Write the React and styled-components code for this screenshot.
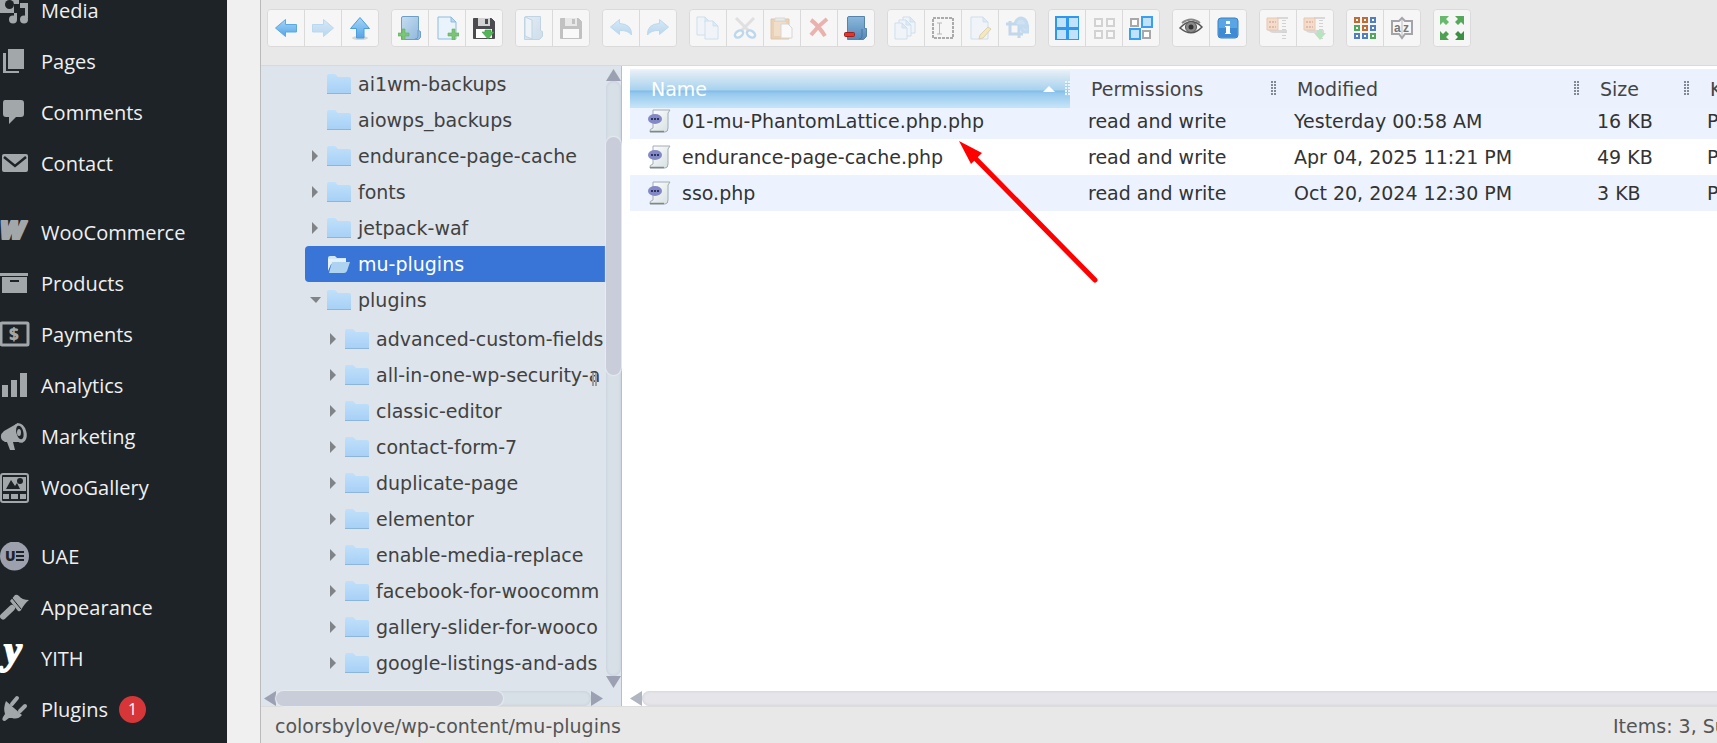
import React from "react";
import styled, { createGlobalStyle } from "styled-components";

const GlobalStyle = createGlobalStyle`
  * {
    box-sizing: border-box;
  }
  body {
    margin: 0;
    background: #f0f0f1;
    font-variant-ligatures: none;
  }
  ul {
    margin: 0;
    padding: 0;
    list-style: none;
  }
  a {
    color: inherit;
    text-decoration: none;
  }
  svg {
    display: block;
    flex: none;
  }
`;

const Page = styled.div`
  display: flex;
  height: 100vh;
  overflow: hidden;
`;

/* admin menu */

const Sidebar = styled.nav`
  flex: none;
  width: 227px;
  overflow: hidden;
  background: #1d2327;
  color: #f0f0f1;
  font: 20px/28px "Open Sans", "Noto Sans", sans-serif;
`;

// the menu is scrolled, so its first item is cut by the top edge
const MenuList = styled.ul`
  margin-top: -15px;
`;

const MenuItem = styled.li`
  margin-top: ${(props) => (props.$spaced ? "18px" : "0")};
`;

const MenuLink = styled.a`
  display: flex;
  align-items: center;
  gap: 11px;
  height: 51px;
`;

const Badge = styled.span`
  width: 27px;
  height: 27px;
  border-radius: 50%;
  background: #d63638;
  color: #fff;
  font-size: 16px;
  line-height: 27px;
  text-align: center;
`;

const MenuIcon = styled.svg.attrs({ viewBox: "0 0 30 30", "aria-hidden": true })`
  width: 30px;
  height: 30px;
  fill: #a2a7aa;
`;

/* file manager */

const Manager = styled.main`
  flex: 1;
  display: flex;
  flex-direction: column;
  min-width: 0;
  margin: 0 -116px 0 33px;
  border-left: 1px solid #bbbbbd;
  background: #e8e8e8;
  font: 19px/24px "DejaVu Sans", Verdana, sans-serif;
`;

const Toolbar = styled.div`
  display: flex;
  gap: 12px;
  padding: 9px 6px 18px;
  border-bottom: 1px solid #d9d9d9;
`;

const ButtonGroup = styled.div`
  display: flex;
  border: 1px solid #dadada;
  border-radius: 4px;
  overflow: hidden;
`;

const ToolButton = styled.button`
  display: flex;
  align-items: center;
  justify-content: center;
  width: 37px;
  height: 36px;
  padding: 0;
  border: 0;
  border-right: 1px solid #dadada;
  background: #f6f6f6;
  &:last-child {
    width: 36px;
    border-right: 0;
  }
  svg {
    opacity: ${(props) => (props.disabled ? 0.38 : 1)};
  }
`;

const ToolIcon = styled.svg.attrs({ viewBox: "0 0 24 24", "aria-hidden": true })`
  width: 24px;
  height: 24px;
  fill: none;
`;

const WorkZone = styled.div`
  flex: 1;
  display: flex;
  min-height: 0;
`;

const TreePane = styled.aside`
  flex: none;
  display: grid;
  grid-template: minmax(0, 1fr) 15px / minmax(0, 1fr) 15px;
  position: relative;
  width: 361px;
  border-right: 1px solid #bbbdc2;
  background: #dde4eb;
  color: #414141;
`;

const TreeScroll = styled.div`
  overflow: hidden;
  white-space: nowrap;
  padding-left: 44px;
`;

const SubTree = styled.ul`
  padding: 3px 0 0 18px;
`;

const TreeRow = styled.a`
  display: flex;
  align-items: center;
  height: 36px;
  border-radius: 4px 0 0 4px;
  background: ${(props) => (props.$active ? "#3875d7" : "transparent")};
  color: ${(props) => (props.$active ? "#fff" : "inherit")};
`;

const Twisty = styled.svg.attrs({ viewBox: "0 0 22 16", "aria-hidden": true })`
  width: 22px;
  height: 16px;
  fill: #808387;
`;

const FolderIcon = styled.svg.attrs({ viewBox: "0 0 24 24", "aria-hidden": true })`
  width: 24px;
  height: 24px;
  margin-right: 7px;
`;

const ResizeGrip = styled.span`
  position: absolute;
  left: 331px;
  top: 307px;
  width: 5px;
  height: 13px;
  border: 2px solid #9d9d9d;
  border-width: 0 2px;
`;

const ScrollBar = styled.div`
  display: flex;
  flex-direction: ${(props) => (props.$vertical ? "column" : "row")};
  padding: ${(props) => (props.$vertical ? "3px 0" : "0 3px")};
`;

const FileScrollBar = styled(ScrollBar)`
  padding: 0;
`;

const ScrollTrack = styled.div`
  flex: 1;
  display: flex;
  flex-direction: inherit;
  border-radius: 8px;
  background: ${(props) => (props.$light ? "#e5e5ea" : "#d8e0e7")};
  box-shadow: inset 0 0 3px rgba(120, 130, 150, 0.25);
`;

const ScrollThumb = styled.div`
  border-radius: 8px;
  background: #c8cdd9;
  box-shadow: 0 0 1px 1px #e6ebf0;
  ${(props) =>
    props.$vertical ? "height: 40%; margin-top: 56px;" : "width: 72%;"}
`;

const ScrollArrow = styled.svg.attrs({ "aria-hidden": true })`
  width: ${(props) => (props.$vertical ? "15px" : "12px")};
  height: ${(props) => (props.$vertical ? "12px" : "15px")};
  fill: ${(props) => (props.$light ? "#b1b5bf" : "#9ba1b2")};
`;

const FilePane = styled.section`
  flex: 1;
  display: flex;
  flex-direction: column;
  position: relative;
  min-width: 0;
  padding: 3px 0 0 8px;
  background: #fff;
  color: #333;
`;

const FileArea = styled.div`
  flex: 1;
  overflow: hidden;
`;

const FileTable = styled.table`
  width: 100%;
  table-layout: fixed;
  border-collapse: collapse;
  white-space: nowrap;
`;

const HeadRow = styled.tr`
  position: relative;
  z-index: 1;
`;

const HeadCell = styled.th`
  width: ${(props) => props.$width};
  height: 34px;
  padding: 0;
  vertical-align: top;
  font-weight: normal;
  text-align: left;
`;

// taller than its cell: the header stays over the top of the first row
const HeadLabel = styled.div`
  display: flex;
  align-items: center;
  height: 39px;
  margin-bottom: -5px;
  padding-left: 21px;
  color: ${(props) => (props.$sorted ? "#fff" : "#444")};
  background: ${(props) =>
    props.$sorted
      ? "linear-gradient(#edf3fe 1px, #e4eef6 2px, #a8d2ee 21px, #7fbbe8 22px, #93c8ec 24px, #c5e3f8 38px)"
      : "#ebf2fe"};
`;

const SortMark = styled.span`
  margin-left: auto;
  margin-right: 10px;
  border: 6px solid transparent;
  border-top: 0;
  border-bottom-color: #fff;
`;

const ColumnGrip = styled.span`
  width: 5px;
  height: 15px;
  margin-left: ${(props) => (props.$sorted ? "0" : "auto")};
  color: ${(props) => (props.$sorted ? "#e9f4fc" : "#858a92")};
  background: repeating-linear-gradient(
      transparent 0 2px,
      ${(props) => (props.$sorted ? "#a8d2ee" : "#ebf2fe")} 2px 3px
    ),
    linear-gradient(90deg, currentColor 2px, transparent 2px 3px, currentColor 3px);
`;

const FileRow = styled.tr`
  background: #fff;
  &:nth-child(odd) {
    background: #edf3fe;
  }
`;

const FileCell = styled.td`
  height: 36px;
  padding: 0 0 0 18px;
  overflow: hidden;
`;

const FileName = styled.div`
  display: flex;
  align-items: center;
  gap: 10px;
`;

const ArrowMark = styled.svg`
  position: absolute;
  left: 334px;
  top: 72px;
  width: 146px;
  height: 148px;
`;

const StatusBar = styled.footer`
  display: flex;
  justify-content: space-between;
  height: 37px;
  padding: 7px 8px 0 14px;
  border-top: 1px solid #dcdcdc;
  color: #555;
  white-space: nowrap;
`;

const StatusInfo = styled.div`
  width: 212px;
`;

const Gradients = () => (
  <svg width="0" height="0" style={{ position: "absolute" }} aria-hidden="true">
    <defs>
      <linearGradient id="sky" x1="0" y1="0" x2="0" y2="1">
        <stop offset="0" stopColor="#a6d5f7" />
        <stop offset="1" stopColor="#55a5e6" />
      </linearGradient>
      <linearGradient id="book" x1="0" y1="0" x2="1" y2="1">
        <stop offset="0" stopColor="#c5ddf0" />
        <stop offset="1" stopColor="#8eb7dc" />
      </linearGradient>
      <linearGradient id="bookDark" x1="0" y1="0" x2="0" y2="1">
        <stop offset="0" stopColor="#8bb8dc" />
        <stop offset="1" stopColor="#5688b8" />
      </linearGradient>
      <linearGradient id="folder" x1="0" y1="0" x2="0" y2="1">
        <stop offset="0" stopColor="#c0e0fa" />
        <stop offset="1" stopColor="#a6d0f6" />
      </linearGradient>
      <linearGradient id="paper" x1="0" y1="0" x2="1" y2="1">
        <stop offset="0" stopColor="#ffffff" />
        <stop offset="1" stopColor="#d5dfe2" />
      </linearGradient>
    </defs>
  </svg>
);

const Plus = ({ x, y }) => (
  <path
    transform={`translate(${x} ${y})`}
    d="M4 0h3v4h4v3H7v4H4V7H0V4h4z"
    fill="#7cc576"
    stroke="#5fae5c"
    strokeWidth="0.6"
  />
);

const Floppy = ({ color }) => (
  <>
    <path d="M1.500 2.500h18l3 3v17h-21z" fill={color} stroke={color} />
    <path d="M6 2h12v8H6z" fill="#d2d2d2" />
    <path d="M13 3h3v5h-3z" fill={color} />
    <path d="M4 13h16v9H4z" fill="#fff" />
  </>
);

const Sheet = ({ x, y, w = 13, h = 17 }) => (
  <>
    <path
      d={`M${x} ${y}h${w - 5}l5 5v${h - 5}h-${w}z`}
      fill="#e8f3fc"
      stroke="#8fbbe0"
    />
    <path d={`M${x + w - 5} ${y}v5h5z`} fill="#b8d8f0" stroke="#8fbbe0" />
  </>
);

const Square = ({ x, y, size = 8, color = "#999", fill = "#fff", stroke = 2 }) => (
  <rect x={x} y={y} width={size} height={size} fill={fill} stroke={color} strokeWidth={stroke} />
);

const Archive = () => (
  <>
    <path d="M11 1h11v2H11zM2 14h19v3H8q-4 0-6-3z" fill="#a8a8a8" />
    <path d="M1 2h11v12H1z" fill="#efb684" stroke="#cf7b43" />
    <path d="M3 6h7M3 11h7" stroke="#c9582f" strokeWidth="2" strokeDasharray="2 1" />
    <path d="M18 4v20" stroke="#999" strokeWidth="4" strokeDasharray="1 2" />
  </>
);

const drawings = {
  back: <path d="M1.500 12 11.500 3.500V8.500H22.500V16H11.500V20.500z" fill="url(#sky)" stroke="#5ba9e2" />,
  forward: <path d="M22.500 12 12.500 3.500V8.500H1.500V16H12.500V20.500z" fill="url(#sky)" stroke="#5ba9e2" />,
  up: (
    <>
      <ellipse cx="12" cy="22" rx="8" ry="2" fill="#d5d5d5" />
      <path d="M12 1.500 21.500 12.500H16V22H8.500V12.500H2.500z" fill="url(#sky)" stroke="#4b9de0" />
    </>
  ),
  newFolder: (
    <>
      <path d="M3.500 2q0-1.500 1.500-1.500h15.500v14l2 1v6l-2 2H3.500z" fill="url(#book)" stroke="#6c9ec9" />
      <path d="M20 14v6q0 3-3 3" stroke="#6c9ec9" />
      <Plus x={0} y={13} />
    </>
  ),
  newFile: (
    <>
      <Sheet x={3} y={1} w={18} h={22} />
      <Plus x={13} y={13} />
    </>
  ),
  upload: (
    <>
      <Floppy color="#4b4b50" />
      <path d="M13 14h6v2h3l-6 7-6-7h3z" fill="#55b558" stroke="#44984a" strokeWidth="0.600" />
    </>
  ),
  open: (
    <>
      <path d="M2.500 2q0-1.500 1.500-1.500h14.500v14l2 1v5l-3 3H2.500z" fill="url(#book)" stroke="#6c9ec9" />
      <path d="M3 1l7 3v19l-7-3z" fill="#e1effa" stroke="#6c9ec9" />
    </>
  ),
  download: <Floppy color="#6e6e6e" />,
  undo: <path d="M1.500 11 10.500 3.500V7.500Q23 8 22.500 19 19 14 10.500 14.500V18.500z" fill="url(#sky)" stroke="#5ba9e2" />,
  redo: <path d="M22.500 11 13.500 3.500V7.500Q1 8 1.500 19 5 14 13.500 14.500V18.500z" fill="url(#sky)" stroke="#5ba9e2" />,
  copy: (
    <>
      <Sheet x={1} y={1} w={13} h={18} />
      <Sheet x={9} y={5} w={13} h={18} />
    </>
  ),
  cut: (
    <>
      <path d="M3 2 17 16M21 2 7 16" stroke="#bdbdbd" strokeWidth="3" />
      <ellipse cx="6" cy="18" rx="4.500" ry="3" transform="rotate(-35 6 18)" fill="#fff" stroke="#62a6dc" strokeWidth="2.500" />
      <ellipse cx="18" cy="18" rx="4.500" ry="3" transform="rotate(35 18 18)" fill="#fff" stroke="#62a6dc" strokeWidth="2.500" />
    </>
  ),
  paste: (
    <>
      <path d="M1 3h18v20H1z" fill="#d9974f" stroke="#bf7b36" />
      <path d="M4 6h12v14H4z" fill="#e7b87e" />
      <path d="M5 2h10v3H5z" fill="#d9d9c4" stroke="#aaa" />
      <path d="M11 8h7l4 4v10H11z" fill="#fff" stroke="#a5a5a5" />
    </>
  ),
  remove: <path d="M4 4q7 5 14 16M20 3Q11 10 4 19" stroke="#d4443a" strokeWidth="4" />,
  empty: (
    <>
      <path d="M3.500 2q0-1.500 1.500-1.500h15.500v12h2v8l-3 3H3.500z" fill="url(#bookDark)" stroke="#5583ad" />
      <path d="M18 13v7q0 3-3 3" stroke="#47749f" />
      <rect x="0.500" y="16.500" width="10" height="4" rx="1" fill="#e3362b" stroke="#a51f1a" />
    </>
  ),
  duplicate: (
    <>
      <Sheet x={9} y={1} w={12} h={16} />
      <Sheet x={5} y={4} w={12} h={16} />
      <Sheet x={1} y={7} w={12} h={16} />
    </>
  ),
  rename: (
    <>
      <rect x="2" y="2" width="20" height="20" stroke="#333" strokeWidth="2" strokeDasharray="3 1" />
      <path d="M6 7h5M6 18h5M8.500 7v11" stroke="#555" />
    </>
  ),
  edit: (
    <>
      <Sheet x={3} y={1} w={17} h={22} />
      <path d="M20 11l3 2-8 9-4 1 1-4z" fill="#f1d36b" stroke="#b6943c" />
    </>
  ),
  resize: (
    <>
      <path d="M5 5v13h13M1 8h13v14" stroke="#6fa6d6" strokeWidth="3" />
      <path d="M10 7q3-7 9-4 5 4 1 10M15 10h9v6H18z" fill="#8ec2ea" stroke="#6fb0e2" strokeWidth="3" />
    </>
  ),
  selectAll: (
    <>
      <path d="M0 0h24v24H0z" fill="#2f97ee" />
      {[2, 14].map((x) =>
        [2, 14].map((y) => <rect key={`${x}-${y}`} x={x} y={y} width="9" height="9" fill="#c0e2fb" />)
      )}
    </>
  ),
  selectNone: [3, 15].map((x) => [3, 15].map((y) => <Square key={`${x}-${y}`} x={x} y={y} size={7} />)),
  invert: (
    <>
      <Square x={2} y={3} size={7} color="#a8a8a8" />
      <Square x={14} y={15} size={7} color="#a8a8a8" />
      <Square x={13} y={1} size={10} color="#3a9ff0" fill="#c0e2fb" />
      <Square x={1} y={13} size={10} color="#3a9ff0" fill="#c0e2fb" />
    </>
  ),
  preview: (
    <>
      <path d="M1 12Q12 0 23 11 13 22 1 12z" fill="#f4f4f4" stroke="#555" strokeWidth="1.500" />
      <circle cx="12" cy="11" r="5.500" fill="#8a8a8a" stroke="#555" />
      <circle cx="12" cy="11" r="2.500" fill="#333" />
      <path d="M3 7Q12 0 21 7" stroke="#888" strokeWidth="2" />
    </>
  ),
  info: (
    <>
      <rect x="2" y="2" width="20" height="20" rx="3" fill="#5aa5e3" stroke="#3b81c4" />
      <path d="M3 12h18v8q0 1-1 1H4q-1 0-1-1z" fill="#3d8bd3" />
      <path d="M10 5h4v3h-4zM9 10h5v7h1v1H9v-1h1v-6H9z" fill="#fff" />
    </>
  ),
  extract: <Archive />,
  archive: (
    <>
      <Archive />
      <path d="M14 14h5v3h4l-6 7-6-7h3z" fill="#55c56d" />
    </>
  ),
  view: ["#c06a35", "#c06a35", "#4f7fc0", "#4fa95a", "#c06a35", "#4f7fc0", "#4f7fc0", "#4f7fc0", "#4fa95a"].map(
    (color, i) => (
      <Square key={i} x={2 + (i % 3) * 8} y={2 + Math.floor(i / 3) * 8} size={4} color={color} />
    )
  ),
  sort: (
    <>
      <path d="M2 5h7l3-3 3 3h7v13h-7l-3 4-3-4H2z" fill="#f7f7f7" stroke="#a3a5a8" strokeWidth="2" />
      <path d="M12 4v16" stroke="#bbb" />
      <text x="4" y="16" fontSize="12" fontWeight="bold" fill="#777">a</text>
      <text x="13" y="16" fontSize="12" fontWeight="bold" fill="#777">z</text>
    </>
  ),
  fullscreen: (
    <>
      <path d="M0 0h9L6 3l3 3-3 3-3-3-3 3z" fill="#67b96b" />
      <path d="M24 0v9l-3-3-3 3-3-3 3-3-3-3z" fill="#55a85a" />
      <path d="M0 24v-9l3 3 3-3 3 3-3 3 3 3z" fill="#4da150" />
      <path d="M24 24h-9l3-3-3-3 3-3 3 3 3-3z" fill="#3c8f42" />
    </>
  ),
};

const toolbarGroups = [
  [["Back", "back"], ["Forward", "forward", true], ["Go to parent folder", "up"]],
  [["New folder", "newFolder"], ["New file", "newFile"], ["Upload files", "upload"]],
  [["Open", "open", true], ["Download", "download", true]],
  [["Undo", "undo", true], ["Redo", "redo", true]],
  [
    ["Copy", "copy", true],
    ["Cut", "cut", true],
    ["Paste", "paste", true],
    ["Delete", "remove", true],
    ["Empty the folder", "empty"],
  ],
  [
    ["Duplicate", "duplicate", true],
    ["Rename", "rename", true],
    ["Edit file", "edit", true],
    ["Resize", "resize", true],
  ],
  [["Select all", "selectAll"], ["Select none", "selectNone", true], ["Invert selection", "invert"]],
  [["Preview", "preview"], ["Get info", "info"]],
  [["Extract", "extract", true], ["Create archive", "archive", true]],
  [["View", "view"], ["Sort", "sort"]],
  [["Full screen", "fullscreen"]],
];

const menu = [
  {
    label: "Media",
    icon: (
      <>
        <path d="M0 0h19v8h-5v9H0z" />
        <circle cx="9.500" cy="8.500" r="4.500" fill="#1d2327" />
        <path d="M20 7h8v15h-3V12h-5zM14 17h3v6h-3z" />
        <circle cx="13" cy="23.500" r="4" />
        <circle cx="24" cy="23.500" r="4" />
      </>
    ),
  },
  { label: "Pages", icon: <path d="M8 2h16v20H8zM3 6h3v18h13v2H3z" /> },
  { label: "Comments", icon: <path d="M5 2h16q3 0 3 3v11q0 3-3 3h-5l-7 7v-7H6q-3 0-3-3V5q0-3 2-3z" /> },
  {
    label: "Contact",
    icon: (
      <>
        <rect x="2" y="5" width="26" height="18" rx="2" />
        <path d="M4 8l11 9 11-9" fill="none" stroke="#1d2327" strokeWidth="2.500" />
      </>
    ),
  },
  {
    label: "WooCommerce",
    spaced: true,
    icon: (
      <text x="0" y="21" fontSize="31" fontWeight="800" fontStyle="italic" stroke="#a2a7aa" strokeWidth="2" strokeLinejoin="round">
        w
      </text>
    ),
  },
  { label: "Products", icon: <path d="M0 4h28v3H0zM2 8h25v16H2zM10 11v2h9v-2z" fillRule="evenodd" /> },
  {
    label: "Payments",
    icon: (
      <>
        <rect x="1" y="3" width="27" height="22" rx="1" fill="none" stroke="#a2a7aa" strokeWidth="3" />
        <text x="9" y="20" fontSize="17" fontWeight="800">$</text>
      </>
    ),
  },
  { label: "Analytics", icon: <path d="M2 14h6v12H2zM11 9h6v17h-6zM20 2h7v24h-7z" /> },
  {
    label: "Marketing",
    icon: (
      <>
        <path d="M18 1 4 9q-5 4-2 9l3 2h2l3 8h5l-2-8 10 0z" />
        <ellipse cx="20" cy="11" rx="6.500" ry="10" transform="rotate(-14 20 11)" />
        <ellipse cx="20" cy="10.500" rx="3.500" ry="7" transform="rotate(-14 20 11)" fill="#1d2327" />
        <ellipse cx="19" cy="10.500" rx="2" ry="3.500" />
      </>
    ),
  },
  {
    label: "WooGallery",
    icon: (
      <>
        <rect x="1" y="1" width="27" height="28" rx="2" fill="none" stroke="#a2a7aa" strokeWidth="2" />
        <path d="M3 4h23v14H3zM3 21h6v5H3zM11 21h7v5h-7zM20 21h6v5h-6z" />
        <path d="M6 16l5-9 4 6 2-3 3 6z" fill="#1d2327" />
        <circle cx="20" cy="8" r="3" fill="#1d2327" />
      </>
    ),
  },
  {
    label: "UAE",
    spaced: true,
    icon: (
      <>
        <circle cx="14.500" cy="14" r="14.500" fill="#9ca1ad" />
        <text x="5" y="19" fontSize="14" fontWeight="800" fill="#1d2327">U</text>
        <path d="M16 9h8v2h-8zM16 13h8v2h-8zM16 17h8v2h-8z" fill="#1d2327" />
      </>
    ),
  },
  {
    label: "Appearance",
    icon: (
      <>
        <path d="M3 23.500 12 15" stroke="#a2a7aa" strokeWidth="6" strokeLinecap="round" />
        <path d="M10 8l5-6q2-1 4 1 3 4 10 4-4 3-8 10-1 2-3 1z" />
        <path d="M12 5l9 11" stroke="#1d2327" strokeWidth="1" />
      </>
    ),
  },
  {
    label: "YITH",
    icon: (
      <text
        x="4"
        y="19"
        fontSize="40"
        fontWeight="bold"
        fontStyle="italic"
        fontFamily="Liberation Serif, serif"
        fill="#fff"
        stroke="#fff"
        strokeWidth="2"
        strokeLinejoin="round"
      >
        y
      </text>
    ),
  },
  {
    label: "Plugins",
    count: 1,
    icon: (
      <>
        <path d="M6 6 22 20q-4 5-10 3l-3 0-4 3q-4 0-2-4l2-3q-2-6 1-13z" />
        <path d="M12 9l5-6M20 16l5-5" stroke="#a2a7aa" strokeWidth="4" strokeLinecap="round" />
      </>
    ),
  },
];

const tree = [
  { name: "ai1wm-backups" },
  { name: "aiowps_backups" },
  { name: "endurance-page-cache", state: "closed" },
  { name: "fonts", state: "closed" },
  { name: "jetpack-waf", state: "closed" },
  { name: "mu-plugins", active: true },
  {
    name: "plugins",
    state: "open",
    children: [
      "advanced-custom-fields",
      "all-in-one-wp-security-a",
      "classic-editor",
      "contact-form-7",
      "duplicate-page",
      "elementor",
      "enable-media-replace",
      "facebook-for-woocomm",
      "gallery-slider-for-wooco",
      "google-listings-and-ads",
    ].map((name) => ({ name, state: "closed" })),
  },
];

const columns = [
  { title: "Name", width: "440px", sorted: true },
  { title: "Permissions", width: "206px" },
  { title: "Modified", width: "303px" },
  { title: "Size", width: "110px" },
  { title: "Kind" },
];

const files = [
  { name: "01-mu-PhantomLattice.php.php", modified: "Yesterday 00:58 AM", size: "16 KB" },
  { name: "endurance-page-cache.php", modified: "Apr 04, 2025 11:21 PM", size: "49 KB" },
  { name: "sso.php", modified: "Oct 20, 2024 12:30 PM", size: "3 KB" },
];

const Folder = ({ open }) =>
  open ? (
    <FolderIcon>
      <path d="M1 6q0-2 2-2h5l2 2h9v6H1z" fill="#d3e6f5" />
      <path d="M5 10h18l-3 9q-1 2-3 2H2z" fill="#aed3f0" />
      <path d="M1 7h18v3H5l-4 9z" fill="#e5f1fa" />
    </FolderIcon>
  ) : (
    <FolderIcon>
      <path d="M0 4q0-2 2-2h6l3 3h11q2 0 2 2v15H0z" fill="url(#folder)" />
      <path d="M0 21h24v1H0z" fill="#8cb5db" />
    </FolderIcon>
  );

const PhpIcon = () => (
  <ToolIcon>
    <path d="M5 1h17l-2 3v15q0 4-3 4H2q-1-3 3-4z" fill="url(#paper)" stroke="#a3adb0" />
    <path d="M2 22.500h14" stroke="#80888b" strokeWidth="1.500" />
    <ellipse cx="7" cy="10" rx="7" ry="5" fill="#8389c4" />
    <path d="M3 9h2v2H3zM6 9h2v2H6zM9 9h2v2H9z" fill="#30335f" />
  </ToolIcon>
);

const TreeNode = ({ node }) => (
  <li>
    <TreeRow href="#" $active={node.active}>
      <Twisty>
        {node.state === "closed" && <path d="M7 2l6 6-6 6z" />}
        {node.state === "open" && <path d="M5 5h11l-5 6z" />}
      </Twisty>
      <Folder open={node.active} />
      {node.name}
    </TreeRow>
    {node.children && (
      <SubTree>
        {node.children.map((child) => (
          <TreeNode key={child.name} node={child} />
        ))}
      </SubTree>
    )}
  </li>
);

export default function App() {
  return (
    <Page>
      <GlobalStyle />
      <Gradients />
      <Sidebar aria-label="Main menu">
        <MenuList>
          {menu.map((item) => (
            <MenuItem key={item.label} $spaced={item.spaced}>
              <MenuLink href="#">
                <MenuIcon>{item.icon}</MenuIcon>
                {item.label}
                {item.count && <Badge>{item.count}</Badge>}
              </MenuLink>
            </MenuItem>
          ))}
        </MenuList>
      </Sidebar>

      <Manager>
        <Toolbar role="toolbar">
          {toolbarGroups.map((group) => (
            <ButtonGroup key={group[0][1]}>
              {group.map(([label, icon, disabled]) => (
                <ToolButton key={icon} type="button" aria-label={label} title={label} disabled={disabled}>
                  <ToolIcon>{drawings[icon]}</ToolIcon>
                </ToolButton>
              ))}
            </ButtonGroup>
          ))}
        </Toolbar>

        <WorkZone>
          <TreePane>
            <TreeScroll>
              <ul>
                {tree.map((node) => (
                  <TreeNode key={node.name} node={node} />
                ))}
              </ul>
            </TreeScroll>
            <ScrollBar $vertical>
              <ScrollArrow $vertical viewBox="0 0 15 12">
                <path d="M7.500 0 15 12H0z" />
              </ScrollArrow>
              <ScrollTrack>
                <ScrollThumb $vertical />
              </ScrollTrack>
              <ScrollArrow $vertical viewBox="0 0 15 12">
                <path d="M0 0h15L7.500 12z" />
              </ScrollArrow>
            </ScrollBar>
            <ScrollBar>
              <ScrollArrow viewBox="0 0 12 15">
                <path d="M12 0v15L0 7.500z" />
              </ScrollArrow>
              <ScrollTrack>
                <ScrollThumb />
              </ScrollTrack>
              <ScrollArrow viewBox="0 0 12 15">
                <path d="M0 0l12 7.500L0 15z" />
              </ScrollArrow>
            </ScrollBar>
            <ResizeGrip />
          </TreePane>

          <FilePane>
            <FileArea>
              <FileTable>
                <thead>
                  <HeadRow>
                    {columns.map((col) => (
                      <HeadCell key={col.title} $width={col.width} scope="col">
                        <HeadLabel $sorted={col.sorted}>
                          {col.title}
                          {col.sorted && <SortMark />}
                          <ColumnGrip $sorted={col.sorted} />
                        </HeadLabel>
                      </HeadCell>
                    ))}
                  </HeadRow>
                </thead>
                <tbody>
                  {files.map((file) => (
                    <FileRow key={file.name}>
                      <FileCell>
                        <FileName>
                          <PhpIcon />
                          {file.name}
                        </FileName>
                      </FileCell>
                      <FileCell>read and write</FileCell>
                      <FileCell>{file.modified}</FileCell>
                      <FileCell>{file.size}</FileCell>
                      <FileCell>PHP source</FileCell>
                    </FileRow>
                  ))}
                </tbody>
              </FileTable>
            </FileArea>
            <FileScrollBar>
              <ScrollArrow $light viewBox="0 0 12 15">
                <path d="M12 0v15L0 7.500z" />
              </ScrollArrow>
              <ScrollTrack $light />
            </FileScrollBar>
            <ArrowMark viewBox="0 0 146 148" aria-hidden="true">
              <path d="M19 20 139 142" stroke="#fe0000" strokeWidth="5" strokeLinecap="round" />
              <path d="M3 3 26 15 15 26z" fill="#fe0000" />
            </ArrowMark>
          </FilePane>
        </WorkZone>

        <StatusBar>
          <div>colorsbylove/wp-content/mu-plugins</div>
          <StatusInfo>Items: 3, Sum: 68 KB</StatusInfo>
        </StatusBar>
      </Manager>
    </Page>
  );
}
